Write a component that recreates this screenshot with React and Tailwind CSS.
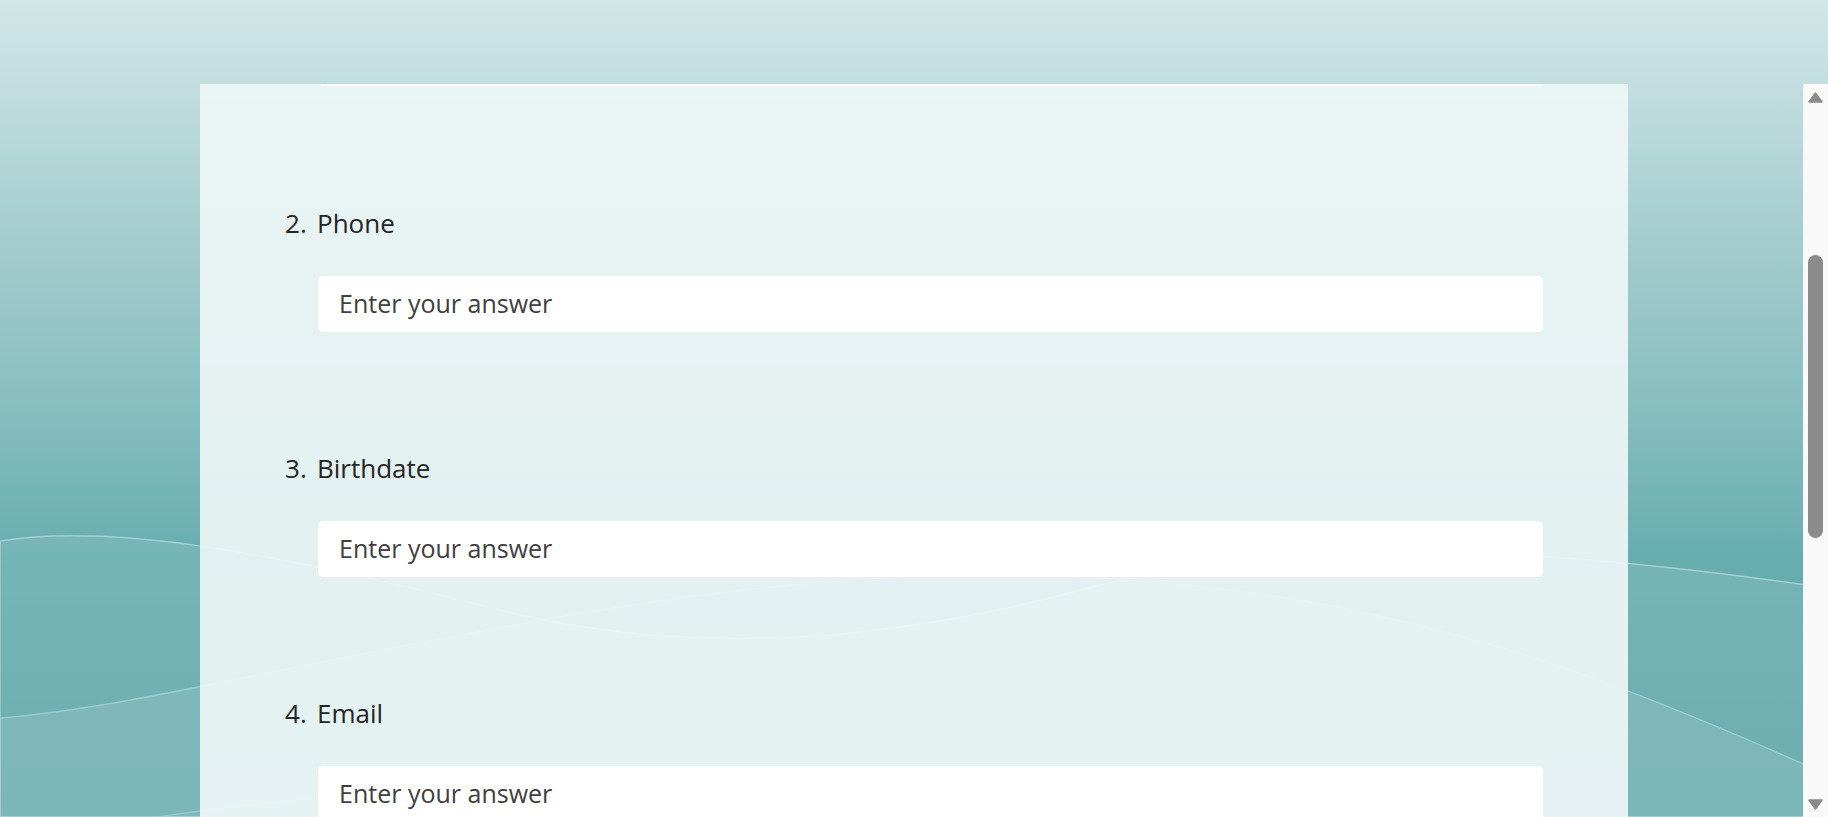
export default function App() {
  const questions = [
    { n: 2, label: "Phone" },
    { n: 3, label: "Birthdate" },
    { n: 4, label: "Email" },
  ];
  return (
    <div className="relative w-[1828px] h-[817px] overflow-hidden font-['Open_Sans',sans-serif]">
      <svg className="absolute inset-0" width="1828" height="817" viewBox="0 0 1828 817">
        <defs>
          <linearGradient id="bg" x1="0" y1="0" x2="0" y2="817" gradientUnits="userSpaceOnUse">
            <stop offset="0" stopColor="#d0e7e7" />
            <stop offset="0.12" stopColor="#c0dcdd" />
            <stop offset="0.32" stopColor="#a0cacc" />
            <stop offset="0.5" stopColor="#87bec0" />
            <stop offset="0.68" stopColor="#68adb0" />
            <stop offset="1" stopColor="#5ea6a9" />
          </linearGradient>
        </defs>
        <rect x="0" y="0" width="1828" height="817" fill="url(#bg)" />
        <path
          d="M0,541 C100,525 250,545 500,610 C700,660 900,640 1100,585 C1300,540 1500,540 1828,588 L1828,817 L0,817 Z"
          fill="#ffffff"
          fillOpacity="0.09"
          stroke="#b4dbdc"
          strokeOpacity="0.75"
          strokeWidth="1.5"
        />
        <path
          d="M0,718 C150,705 300,660 600,610 C850,570 1050,560 1300,600 C1500,635 1650,695 1828,775 L1828,817 L0,817 Z"
          fill="#ffffff"
          fillOpacity="0.1"
          stroke="#a6d2d3"
          strokeOpacity="0.75"
          strokeWidth="1.5"
        />
        <path
          d="M0,840 C120,822 200,808 400,790 L400,817 L0,817 Z"
          fill="#ffffff"
          fillOpacity="0.05"
          stroke="#a6d2d3"
          strokeOpacity="0.6"
          strokeWidth="1.5"
        />
      </svg>

      <div className="relative flex flex-col h-full">
        <div className="h-[84px] shrink-0" />
        <div className="relative flex-1 overflow-hidden">
          <div className="mx-auto w-[1428px] h-full bg-[rgba(238,246,246,0.92)]">
            <div className="ml-[120px] w-[1221px] h-[2px] bg-white rounded-b-[2px]" />
            <div className="pt-[119px]">
              {questions.map((q) => (
                <div key={q.n} className="mb-[118px]">
                  <div className="flex items-baseline text-[26px] leading-[36px] text-[#242424]">
                    <span className="ml-[85px] w-[32px]">{q.n}.</span>
                    <span>{q.label}</span>
                  </div>
                  <div className="ml-[118px] mt-[35px] w-[1225px] h-[56px] bg-white rounded-[5px] flex items-center pl-[21px] text-[25px] text-[#404040]">
                    Enter your answer
                  </div>
                </div>
              ))}
            </div>
          </div>

          <div className="absolute right-0 top-0 bottom-0 w-[25px] bg-[#f9f9f9] flex flex-col items-center">
            <svg className="mt-[8px]" width="15" height="11" viewBox="0 0 15 11">
              <path d="M7.5,1 L14,10 L1,10 Z" fill="#8a8a8a" stroke="#8a8a8a" strokeWidth="1.5" strokeLinejoin="round" />
            </svg>
            <div className="mt-[152px] w-[15px] h-[283px] rounded-full bg-[#8b8b8b]" />
            <div className="flex-1" />
            <svg className="mb-[7px]" width="15" height="11" viewBox="0 0 15 11">
              <path d="M1,1 L14,1 L7.5,10 Z" fill="#8a8a8a" stroke="#8a8a8a" strokeWidth="1.5" strokeLinejoin="round" />
            </svg>
          </div>
        </div>
      </div>
    </div>
  );
}
